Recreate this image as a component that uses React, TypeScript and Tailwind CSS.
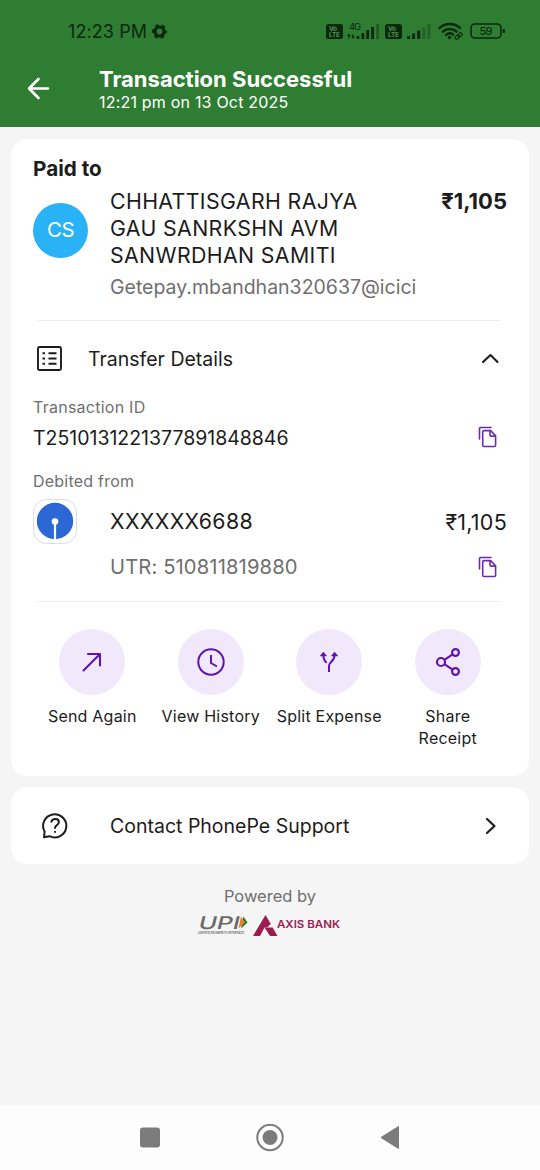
import type { ReactNode } from 'react';

interface ActionProps {
    label: string;
    children: ReactNode;
}

function Action({ label, children }: ActionProps) {
    return (
        <div className="flex w-[118.5px] flex-col items-center">
            <div className="flex size-[66px] items-center justify-center rounded-full bg-[#f2e8fc] text-[#5f14b0]">
                {children}
            </div>
            <span className="mt-2.5 w-[107px] text-center text-[16px] leading-[22.4px] tracking-[0.22px]">{label}</span>
        </div>
    );
}

function CopyIcon() {
    return (
        <svg width="20" height="22" viewBox="0 0 20 22" fill="none" stroke="#6a2bb0" strokeWidth="1.6" strokeLinejoin="round" strokeLinecap="round">
            <path d="M1.5 13V2.5a1 1 0 0 1 1-1H13" />
            <path d="M6 4.6h6.6l5 5.2v9.4a1.3 1.3 0 0 1-1.3 1.3H6a1.3 1.3 0 0 1-1.3-1.3V5.9A1.3 1.3 0 0 1 6 4.6z" />
            <path d="M12 4.8v4.3a1 1 0 0 0 1 1h4.4" />
        </svg>
    );
}

function VolteBadge() {
    return (
        <svg width="17" height="15" viewBox="0 0 17 15">
            <rect width="17" height="15" rx="2.5" fill="#0a280c" />
            <text x="3" y="6.8" fontSize="6.5" fontWeight="700" fill="#4d9450" textLength="8">Vo</text>
            <text x="3" y="13" fontSize="6.5" fontWeight="700" fill="#4d9450" textLength="11">LTE</text>
        </svg>
    );
}

function SignalBars({ active }: { active: number }) {
    const bars = [3, 5.5, 8.5, 11.5, 15];
    return (
        <svg width="24" height="15" viewBox="0 0 24 15" fill="#0a280c">
            {bars.map((h, i) => (
                <rect key={h} x={i * 5.1} y={15 - h} width="3" height={h} rx="0.5" opacity={i < active ? 1 : 0.3} />
            ))}
        </svg>
    );
}

function StatusBar() {
    return (
        <div className="flex h-[62px] items-center pr-[34px] pl-[68px] text-[#0a280c]">
            <span className="text-[18px] tracking-[0.1px]">12:23 PM</span>
            <svg className="ml-[5px]" width="15" height="15" viewBox="0 0 15 15" fill="none" stroke="currentColor">
                <circle cx="7.5" cy="7.5" r="4.5" strokeWidth="3.2" />
                <circle cx="7.5" cy="7.5" r="6.2" strokeWidth="2.4" strokeDasharray="3.5 2.99" strokeDashoffset="1.75" />
            </svg>
            <div className="ml-auto flex items-center">
                <VolteBadge />
                <svg className="ml-[4px] overflow-visible" width="34" height="19" viewBox="0 0 34 19" fill="#0a280c">
                    <text x="2" y="8" fontSize="9.5" textLength="12">4G</text>
                    <path d="M1.8 11.5L3.7 14H2.4v2.2H1.2V14H0zM6 17l-1.9-2.6h1.3v-2.2h1.2v2.2h1.3z" />
                    <rect x="9.5" y="14" width="2.8" height="3" rx="0.5" />
                    <rect x="14.5" y="11" width="2.8" height="6" rx="0.5" />
                    <rect x="19.3" y="8" width="2.8" height="9" rx="0.5" />
                    <rect x="24.2" y="5" width="2.8" height="12" rx="0.5" />
                    <rect x="29.2" y="2" width="2.8" height="15" rx="0.5" opacity="0.4" />
                </svg>
                <div className="ml-[4px]"><VolteBadge /></div>
                <div className="ml-[5px]"><SignalBars active={3} /></div>
                <svg className="ml-[7px]" width="26" height="18" viewBox="0 0 26 18" fill="none" stroke="#0a280c" strokeWidth="2.4" strokeLinecap="round">
                    <path d="M1.5 6a15 15 0 0 1 20.5 0" />
                    <path d="M4.8 9.7a10 10 0 0 1 13.8 0" />
                    <path d="M8 13a5.5 5.5 0 0 1 7 -0.5" />
                    <circle cx="11.5" cy="15.5" r="1" strokeWidth="1.5" />
                    <g strokeWidth="1.1" transform="rotate(-40 20.5 14)">
                        <rect x="16.5" y="12.5" width="4.8" height="3.2" rx="1.6" />
                        <rect x="20" y="12.5" width="4.8" height="3.2" rx="1.6" />
                    </g>
                </svg>
                <svg className="ml-[6px]" width="36" height="16" viewBox="0 0 36 16" fill="none" stroke="#0a280c">
                    <rect x="1" y="1" width="30" height="14" rx="4" strokeWidth="1.6" />
                    <path d="M33.8 6v4" strokeWidth="2" />
                    <text x="9.5" y="12" fontSize="11" fontWeight="500" fill="#0a280c" stroke="none" textLength="13">59</text>
                </svg>
            </div>
        </div>
    );
}

function Header() {
    return (
        <header className="h-[127px] bg-[#2f7d33] text-white">
            <StatusBar />
            <div className="flex pl-[27px]">
                <svg className="mt-[15px]" width="23" height="23" viewBox="0 0 23 23" fill="none" stroke="currentColor" strokeWidth="2.6" strokeLinecap="round" strokeLinejoin="round">
                    <path d="M21 11.5H2M11.5 2L2 11.5L11.5 21" />
                </svg>
                <div className="ml-[49px] pt-1">
                    <h1 className="text-[22px] leading-[26px] font-bold">Transaction Successful</h1>
                    <p className="-mt-px text-[16px] leading-[22px] tracking-[0.2px]">12:21 pm on 13 Oct 2025</p>
                </div>
            </div>
        </header>
    );
}

function TransactionCard() {
    return (
        <section className="h-[637px] rounded-2xl bg-white pt-4">
            <h2 className="px-[22px] text-[20.7px] leading-[27px] font-bold">Paid to</h2>
            <div className="flex pt-[6px] pr-[22px] pl-[22px]">
                <div className="mt-[15px] flex size-[55px] items-center justify-center rounded-full bg-[#29b3f6] text-[20.5px] tracking-[-0.5px] text-white">
                    CS
                </div>
                <div className="ml-[22px] w-[310px]">
                    <p className="w-[260px] text-[21.3px] leading-[27px] tracking-[0.38px]">CHHATTISGARH RAJYA GAU SANRKSHN AVM SANWRDHAN SAMITI</p>
                    <p className="mt-[5px] text-[19.5px] leading-[26px] text-[#6f6f6f]">Getepay.mbandhan320637@icici</p>
                </div>
                <p className="ml-auto text-[22px] leading-[27px] font-bold">₹1,105</p>
            </div>
            <hr className="mt-[20px] mr-[29px] ml-[26px] border-[#ededed]" />

            <div className="flex h-[76px] items-center pr-[30px] pl-[26px]">
                <svg className="-mt-px" width="25" height="25" viewBox="0 0 25 25" fill="none" stroke="#1c1c1c" strokeWidth="1.9">
                    <rect x="1" y="1" width="23" height="23" rx="1.5" />
                    <path d="M5.5 7.3h2.5M5.5 12.5h2.5M5.5 17.7h2.5M11.5 7.3h8M11.5 12.5h8M11.5 17.7h8" />
                </svg>
                <span className="ml-[26px] pt-[2px] text-[19.5px]">Transfer Details</span>
                <svg className="ml-auto -mt-px" width="18" height="11" viewBox="0 0 18 11" fill="none" stroke="#1c1c1c" strokeWidth="2.1" strokeLinecap="round" strokeLinejoin="round">
                    <path d="M2 9L9.5 2l7 7" />
                </svg>
            </div>

            <p className="px-[22px] text-[16px] leading-5 tracking-[0.25px] text-[#6f6f6f]">Transaction ID</p>
            <div className="mt-[6px] flex h-[28px] items-center justify-between pr-[31px] pl-[22px]">
                <span className="pt-[3px] text-[19.5px] tracking-[-0.02px]">T2510131221377891848846</span>
                <CopyIcon />
            </div>
            <p className="mt-[20px] px-[22px] text-[16px] leading-5 tracking-[0.22px] text-[#6f6f6f]">Debited from</p>
            <div className="mt-[8px] flex h-[45px] items-center pr-[22px] pl-[22px]">
                <svg width="44" height="45" viewBox="0 0 44 45">
                    <rect x="0.5" y="0.5" width="43" height="44" rx="13" fill="#fff" stroke="#dcdcdc" />
                    <circle cx="22" cy="22" r="18.2" fill="#2b68d6" />
                    <circle cx="22" cy="22.5" r="3.3" fill="#fff" />
                    <path d="M22 22v19" stroke="#fff" strokeWidth="2.2" />
                </svg>
                <span className="ml-[33px] pt-px text-[21.3px] tracking-[0.38px]">XXXXXX6688</span>
                <span className="ml-auto pt-px text-[21.5px] tracking-[0.25px]">₹1,105</span>
            </div>
            <div className="mt-[9px] flex h-[28px] items-center justify-between pr-[31px] pl-[99px]">
                <span className="pt-px text-[20.2px] tracking-[0.12px] text-[#6f6f6f]">UTR: 510811819880</span>
                <CopyIcon />
            </div>
            <hr className="mt-[20px] mr-[29px] ml-[26px] border-[#ededed]" />

            <div className="mt-[27px] flex justify-center">
                <Action label="Send Again">
                    <svg width="20" height="20" viewBox="0 0 20 20" fill="none" stroke="currentColor" strokeWidth="2.1" strokeLinecap="round" strokeLinejoin="round">
                        <path d="M1.5 18.5L18 2M6 2H18V13.5" />
                    </svg>
                </Action>
                <Action label="View History">
                    <svg width="28" height="28" viewBox="0 0 28 28" fill="none" stroke="currentColor" strokeWidth="2">
                        <circle cx="14" cy="14" r="12.7" />
                        <path d="M14 7v8l6 3.5" />
                    </svg>
                </Action>
                <Action label="Split Expense">
                    <svg width="18" height="22" viewBox="0 0 18 22" fill="none" stroke="currentColor" strokeWidth="2">
                        <path d="M9 21v-6.5c0-3.5 5.6-4 5.6-10.5M3.4 4c0 4.2 1.1 6 3.3 7.7" />
                        <path d="M0.3 4.9L3.4 1l3.1 3.900zM11.500 4.9L14.6 1l3.1 3.900z" fill="currentColor" stroke="currentColor" strokeWidth="0.6" />
                    </svg>
                </Action>
                <Action label="Share Receipt">
                    <svg width="26" height="28" viewBox="0 0 26 28" fill="none" stroke="currentColor" strokeWidth="2.2">
                        <circle cx="6" cy="14" r="4" />
                        <circle cx="20.5" cy="4.5" r="3.4" />
                        <circle cx="20.5" cy="23.5" r="3.4" />
                        <path d="M9.4 11.8l8.2-5.4M9.4 16.2l8.2 5.4" />
                    </svg>
                </Action>
            </div>
        </section>
    );
}

function SupportCard() {
    return (
        <section className="mt-[11px] flex h-[77px] items-center rounded-2xl bg-white pr-[32px] pl-[31px]">
            <svg width="26" height="27" viewBox="0 0 26 27" fill="none" stroke="#1c1c1c" strokeWidth="2" strokeLinecap="round" strokeLinejoin="round">
                <path d="M2 25.3L2.6 19.5A11.6 11.6 0 1 1 7.5 24.2z" />
                <path d="M9.3 9.6c.8-1.8 2.1-2.5 4-2.5 2.1 0 3.6 1.2 3.6 3.1 0 2.6-3.9 2.9-3.9 5.7" />
                <path d="M13 19.8v.2" />
            </svg>
            <span className="ml-[42px] pt-[2px] text-[19.5px]">Contact PhonePe Support</span>
            <svg className="ml-auto" width="12" height="18" viewBox="0 0 12 18" fill="none" stroke="#1c1c1c" strokeWidth="2.2" strokeLinecap="round" strokeLinejoin="round">
                <path d="M2 2l7.5 7-7.5 7" />
            </svg>
        </section>
    );
}

function PoweredBy() {
    return (
        <footer className="flex flex-col items-center pt-[21px]">
            <p className="text-[16.5px] leading-[22px] text-[#6f6f6f]">Powered by</p>
            <svg className="mt-[7px] overflow-visible" width="144" height="24" viewBox="0 0 144 24">
                <text transform="translate(-0.5 15) skewX(-14)" fontSize="17.5" fontWeight="500" fill="#69696b" textLength="41" lengthAdjust="spacingAndGlyphs">UPI</text>
                <path d="M45.5 2.5L49.5 8.5l-6.5 6z" fill="#18803c" />
                <path d="M43 2.5L47 8.5l-6.5 6z" fill="#ef7d28" />
                <text x="0" y="19.5" fontSize="3.5" fontStyle="italic" fontWeight="600" fill="#69696b" textLength="46" lengthAdjust="spacingAndGlyphs">UNIFIED PAYMENTS INTERFACE</text>
                <path d="M67.5 1L72.8 10 69 13.5h-2.5L62 22H55z" fill="#9b1c50" />
                <path d="M66.5 13.5H74.6L79.5 22h-7.5z" fill="#9b1c50" />
                <text x="79" y="13.8" fontSize="10.2" fontWeight="600" fill="#9b1c50" textLength="63" lengthAdjust="spacingAndGlyphs">AXIS BANK</text>
            </svg>
        </footer>
    );
}

function NavBar() {
    return (
        <nav className="mt-auto flex h-[65px] items-center justify-center bg-[#fdfdfd]">
            <svg width="260" height="28" viewBox="0 0 260 28" fill="#7b7b7b">
                <rect x="0" y="3.5" width="20" height="20" rx="3" />
                <circle cx="130" cy="13.5" r="12.7" fill="none" stroke="#7b7b7b" strokeWidth="2" />
                <circle cx="130" cy="13.5" r="7.5" />
                <path d="M241 13.5L258.5 2.5V24.5z" stroke="#7b7b7b" strokeLinejoin="round" />
            </svg>
        </nav>
    );
}

export default function App() {
    return (
        <div className="flex h-[1170px] w-[540px] flex-col overflow-hidden bg-[#f5f5f5] font-['Inter',sans-serif] text-[#1c1c1c]">
            <Header />
            <main className="px-[11px] pt-3">
                <TransactionCard />
                <SupportCard />
            </main>
            <PoweredBy />
            <NavBar />
        </div>
    );
}
